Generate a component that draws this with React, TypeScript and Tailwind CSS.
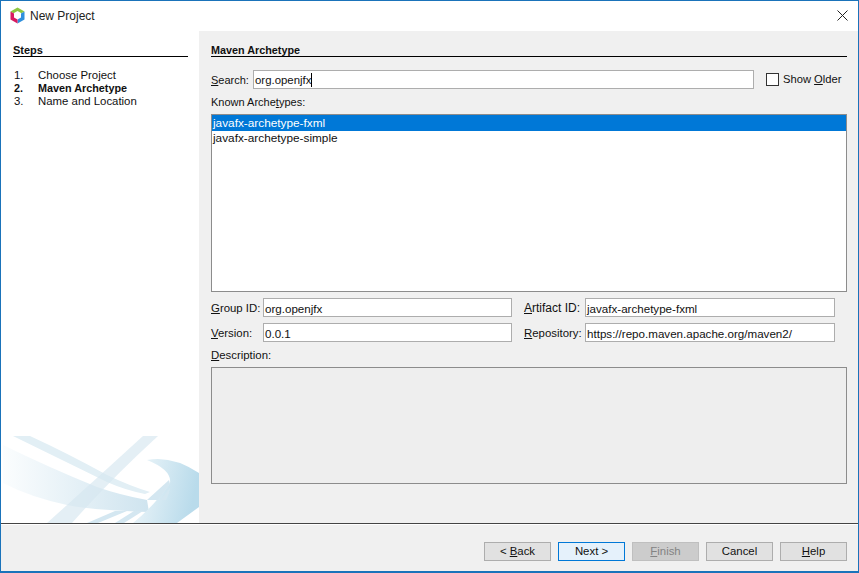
import React from "react";

const font = "font-['Liberation_Sans',sans-serif] text-[11.4px] leading-[13px] text-[#111]";

function Field({ value, className }: { value: string; className: string }) {
  return (
    <div className={`h-[19px] bg-white border border-[#adadad] pl-[1px] pt-[1px] flex items-center whitespace-nowrap text-[11.6px] ${className}`}>
      {value}
    </div>
  );
}

function Btn({ children, className = "" }: { children: React.ReactNode; className?: string }) {
  return (
    <div className={`w-[67px] h-[19px] flex items-center justify-center border ${className}`}>
      {children}
    </div>
  );
}

function Artwork() {
  return (
    <svg className="absolute left-0 bottom-0" width="198" height="88" viewBox="1 435 198 88">
      <defs>
        <linearGradient id="wide" x1="0" x2="1" y1="0" y2="0">
          <stop offset="0" stopColor="#fbfdfe" />
          <stop offset="1" stopColor="#cfe4ef" />
        </linearGradient>
        <linearGradient id="swoosh" x1="0" x2="1" y1="0" y2="0.2">
          <stop offset="0" stopColor="#f0f7fa" />
          <stop offset="1" stopColor="#b9dbeb" />
        </linearGradient>
      </defs>
      <path d="M3 445 Q50 468 97 487 Q120 495 147 500 L149 512 Q90 510 67 505 Q30 497 3 483 Z" fill="url(#wide)" />
      <path d="M13 436 L30 436 Q67 453 107 475 Q130 486 150 492 L145 494 Q125 490 107 482 Q60 459 13 436 Z" fill="#e2eff5" />
      <path d="M143 436 L158 436 Q110 480 72 523 L47 523 Q95 480 143 436 Z" fill="#d5e6ef" fillOpacity="0.65" />
      <path d="M115 511 L127 511 L98 523 L87 523 Z" fill="#d4e7f1" />
      <path d="M134 511 L143 511 L124 523 L115 523 Z" fill="#d4e7f1" />
      <path d="M147 460 Q172 455 199 473 L199 507 Q188 515 177 523 L133 523 Q155 505 170 483 Q172 470 147 460 Z" fill="url(#swoosh)" />
      <path d="M147 500 L169 480 L170 484 L158 500 Z" fill="#d4e7f1" />
      <path d="M160 500 L170 488 L169 493 L166 500 Z" fill="#d4e7f1" />
    </svg>
  );
}

export default function App() {
  return (
    <div className={`w-[859px] h-[573px] flex flex-col bg-white border border-[#1a73ba] border-b-[2px] overflow-hidden ${font}`}>
      {/* Title bar */}
      <div className="h-[30px] flex items-center shrink-0 bg-white pb-[1px]">
        <svg className="ml-[9px]" width="15" height="17" viewBox="0 0 15 17">
          <path d="M7.5 0.5 L14.5 4.5 L7.5 8.5 L0.5 4.5 Z" fill="#8cc63f" />
          <path d="M14.5 4.5 L14.5 12.5 L7.5 16.5 L7.5 8.5 Z" fill="#2f8fdc" />
          <path d="M0.5 4.5 L7.5 8.5 L7.5 16.5 L0.5 12.5 Z" fill="#d81b60" />
          <path d="M7.5 4 L11 6 L11 10.5 L7.5 12.5 L4 10.5 L4 6 Z" fill="#ffffff" />
        </svg>
        <span className="ml-[5px] text-[12px] pt-[1px] text-[#222]">New Project</span>
        <svg className="ml-auto mr-[10px]" width="11" height="11" viewBox="0 0 11 11" stroke="#222" strokeWidth="1">
          <path d="M0.5 0.5 L10.5 10.5 M10.5 0.5 L0.5 10.5" />
        </svg>
      </div>

      <div className="flex flex-1 min-h-0">
        {/* Steps panel */}
        <div className="relative w-[198px] shrink-0 bg-white pl-[12px] pr-[11px] pt-[13px]">
          <div className="font-bold h-[12px] text-[11px]">Steps</div>
          <div className="h-px bg-black" />
          <div className="mt-[12px] flex flex-col">
            <div className="flex"><span className="w-[25px] pl-[1px]">1.</span>Choose Project</div>
            <div className="flex font-bold text-[10.8px]"><span className="w-[25px] pl-[1px]">2.</span>Maven Archetype</div>
            <div className="flex"><span className="w-[25px] pl-[1px]">3.</span>Name and Location</div>
          </div>
          <Artwork />
        </div>

        {/* Maven Archetype panel */}
        <div className="flex-1 min-w-0 bg-[#f0f0f0] pl-[12px] pr-[11px] pt-[13px] flex flex-col">
          <div className="font-bold h-[12px] text-[10.8px]">Maven Archetype</div>
          <div className="h-px bg-black shrink-0" />
          <div className="flex items-center mt-[13px] h-[19px]">
            <span className="w-[42px] text-[11px] pt-[1px]"><u>S</u>earch:</span>
            <div className="w-[501px] h-[19px] bg-white border border-[#adadad] pl-[1px] pt-[1px] flex items-center text-[11.4px]">
              org.openjfx<span className="w-px h-[14px] bg-black" />
            </div>
            <div className="ml-[12px] w-[13px] h-[13px] bg-white border border-[#333]" />
            <span className="ml-[4px] whitespace-nowrap text-[11.2px]">Show <u>O</u>lder</span>
          </div>
          <div className="mt-[7px] h-[13px] text-[11px]">Known Arche<u>t</u>ypes:</div>
          <div className="mt-[5px] h-[178px] bg-white border border-[#8c8c8c] flex flex-col text-[11.8px]">
            <div className="h-[16px] bg-[#0078d7] text-white pl-[1px] flex items-center">javafx-archetype-fxml</div>
            <div className="h-[16px] pl-[1px] pb-[1px] flex items-center">javafx-archetype-simple</div>
          </div>
          <div className="mt-[6px] flex items-center h-[19px]">
            <span className="w-[52px] pt-[1px] whitespace-nowrap"><u>G</u>roup ID:</span>
            <Field value="org.openjfx" className="w-[249px]" />
            <span className="ml-[12px] w-[61px] pt-[1px] whitespace-nowrap text-[12px]"><u>A</u>rtifact ID:</span>
            <Field value="javafx-archetype-fxml" className="w-[250px]" />
          </div>
          <div className="mt-[6px] flex items-center h-[19px]">
            <span className="w-[52px] pt-[1px]"><u>V</u>ersion:</span>
            <Field value="0.0.1" className="w-[249px]" />
            <span className="ml-[12px] w-[61px] pt-[1px] whitespace-nowrap"><u>R</u>epository:</span>
            <Field value="https://repo.maven.apache.org/maven2/" className="w-[250px]" />
          </div>
          <div className="mt-[7px] h-[13px]"><u>D</u>escription:</div>
          <div className="mt-[5px] h-[117px] bg-[#eeeeee] border border-[#8c8c8c]" />
        </div>
      </div>

      {/* Button bar */}
      <div className="h-[48px] shrink-0 bg-[#f0f0f0] border-t border-[#444]">
        <div className="h-px bg-white" />
        <div className="flex justify-end gap-[7px] pt-[17px] pr-[11px]">
          <Btn className="bg-[#e1e1e1] border-[#adadad]">&lt;&nbsp;<u>B</u>ack</Btn>
          <Btn className="bg-[#e5f1fb] border-[#0078d7]">Next &gt;</Btn>
          <Btn className="bg-[#cccccc] border-[#bfbfbf] text-[#838383]"><u>F</u>inish</Btn>
          <Btn className="bg-[#e1e1e1] border-[#adadad]">Cancel</Btn>
          <Btn className="bg-[#e1e1e1] border-[#adadad]"><u>H</u>elp</Btn>
        </div>
      </div>
    </div>
  );
}
